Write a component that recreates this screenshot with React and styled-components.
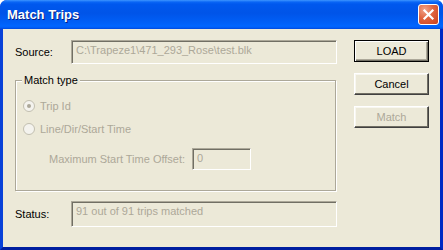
import styled, { createGlobalStyle } from "styled-components";

const GlobalStyle = createGlobalStyle`
  html, body {
    margin: 0;
    padding: 0;
    background: #ffffff;
  }
  body {
    font-family: "Liberation Sans", Arial, sans-serif;
    font-size: 11px;
  }
`;

const Window = styled.div`
  width: 443px;
  height: 250px;
  display: flex;
  flex-direction: column;
  box-sizing: border-box;
  border-radius: 7px 7px 0 0;
  overflow: hidden;
  background: #0831d9;
`;

const TitleBar = styled.div`
  height: 29px;
  flex-shrink: 0;
  display: flex;
  align-items: center;
  justify-content: space-between;
  padding: 0 4px 0 7px;
  background: linear-gradient(
    180deg,
    #3d95ff 0%,
    #0a66f5 7%,
    #0058ee 14%,
    #0054e8 45%,
    #0060f8 80%,
    #0066ff 90%,
    #005af4 96%,
    #0047d8 100%
  );
`;

const Title = styled.span`
  font-family: "Liberation Sans", Arial, sans-serif;
  font-weight: bold;
  font-size: 13px;
  color: #ffffff;
  text-shadow: 1px 1px 0 #0a1f80;
  padding-bottom: 1px;
`;

const CloseButton = styled.div`
  width: 21px;
  height: 21px;
  box-sizing: border-box;
  border: 1px solid #ffffff;
  border-radius: 3px;
  background: radial-gradient(circle at 30% 25%, #f0a38a 0%, #e0643f 45%, #c8401e 100%);
  display: flex;
  align-items: center;
  justify-content: center;
  margin-bottom: 1px;
`;

const Frame = styled.div`
  flex: 1;
  display: flex;
  border-left: 3px solid #0841d8;
  border-right: 3px solid #0029c4;
  border-bottom: 3px solid #001ea0;
  background: #ece9d8;
`;

const Body = styled.div`
  flex: 1;
  display: flex;
  gap: 17px;
  padding: 11px 0 0 12px;
  color: #000000;
`;

const LeftColumn = styled.div`
  width: 322px;
  display: flex;
  flex-direction: column;
`;

const FieldRow = styled.div`
  display: flex;
  align-items: center;
  height: ${(p) => p.$height}px;
  margin-top: ${(p) => p.$top || 0}px;
`;

const Label = styled.span`
  width: ${(p) => p.$width}px;
  flex-shrink: 0;
  color: ${(p) => (p.$disabled ? "#aca899" : "#000000")};
  line-height: 13px;
`;

const TextField = styled.div`
  width: ${(p) => p.$width}px;
  height: ${(p) => p.$height}px;
  box-sizing: border-box;
  border-top: 1px solid #aca899;
  border-left: 1px solid #aca899;
  border-right: 1px solid #ffffff;
  border-bottom: 1px solid #ffffff;
  box-shadow: inset 1px 1px 0 #716f64;
  background: #ece9d8;
  color: #aca899;
  padding: 3px 0 0 4px;
  line-height: 13px;
  white-space: nowrap;
  overflow: hidden;
`;

const GroupBox = styled.div`
  position: relative;
  margin-top: 16px;
  width: 321px;
  height: 111px;
  box-sizing: border-box;
  border: 1px solid #aca899;
  box-shadow: 1px 1px 0 #ffffff, inset 1px 1px 0 #ffffff;
  padding: 17px 0 0 7px;
  display: flex;
  flex-direction: column;
`;

const Legend = styled.span`
  position: absolute;
  top: -7px;
  left: 6px;
  padding: 0 2px;
  background: #ece9d8;
  line-height: 13px;
`;

const RadioRow = styled.div`
  display: flex;
  align-items: center;
  gap: 5px;
  height: 16px;
  margin-bottom: 7px;
  color: #aca899;
`;

const Radio = styled.span`
  width: 12px;
  height: 12px;
  box-sizing: border-box;
  border-radius: 50%;
  border: 1px solid #c2bfb0;
  background: #f4f3ee;
  display: flex;
  align-items: center;
  justify-content: center;

  &::after {
    content: "";
    display: ${(p) => (p.$checked ? "block" : "none")};
    width: 4px;
    height: 4px;
    border-radius: 50%;
    background: #aca899;
  }
`;

const OffsetRow = styled.div`
  display: flex;
  align-items: center;
  margin: 4px 0 0 26px;
`;

const ButtonColumn = styled.div`
  display: flex;
  flex-direction: column;
  gap: 11px;
`;

const Button = styled.div`
  width: 75px;
  height: 22px;
  box-sizing: border-box;
  display: flex;
  align-items: center;
  justify-content: center;
  background: #ece9d8;
  color: ${(p) => (p.$disabled ? "#aca899" : "#000000")};
  border-top: 1px solid ${(p) => (p.$default ? "#000000" : "#ffffff")};
  border-left: 1px solid ${(p) => (p.$default ? "#000000" : "#ffffff")};
  border-right: 1px solid ${(p) => (p.$default ? "#000000" : "#404040")};
  border-bottom: 1px solid ${(p) => (p.$default ? "#000000" : "#404040")};
  box-shadow: ${(p) =>
    p.$default
      ? "inset 1px 1px 0 #ffffff, inset -1px -1px 0 #716f64, inset -2px -2px 0 #aca899"
      : "inset -1px -1px 0 #716f64, inset 1px 1px 0 #f8f7f0"};
`;

const CloseIcon = () => (
  <svg width="13" height="13" viewBox="0 0 13 13">
    <path d="M2.5 2.5 L10.5 10.5 M10.5 2.5 L2.5 10.5" stroke="#ffffff" strokeWidth="2.2" strokeLinecap="square" />
  </svg>
);

export default function App() {
  return (
    <>
      <GlobalStyle />
      <Window>
        <TitleBar>
          <Title>Match Trips</Title>
          <CloseButton>
            <CloseIcon />
          </CloseButton>
        </TitleBar>
        <Frame>
          <Body>
            <LeftColumn>
              <FieldRow $height={24}>
                <Label $width={56}>Source:</Label>
                <TextField $width={266} $height={24}>
                  C:\Trapeze1\471_293_Rose\test.blk
                </TextField>
              </FieldRow>

              <GroupBox>
                <Legend>Match type</Legend>
                <RadioRow>
                  <Radio $checked />
                  Trip Id
                </RadioRow>
                <RadioRow>
                  <Radio />
                  Line/Dir/Start Time
                </RadioRow>
                <OffsetRow>
                  <Label $width={143} $disabled>
                    Maximum Start Time Offset:
                  </Label>
                  <TextField $width={59} $height={22}>
                    0
                  </TextField>
                </OffsetRow>
              </GroupBox>

              <FieldRow $height={26} $top={10}>
                <Label $width={56}>Status:</Label>
                <TextField $width={267} $height={26}>
                  91 out of 91 trips matched
                </TextField>
              </FieldRow>
            </LeftColumn>

            <ButtonColumn>
              <Button $default>LOAD</Button>
              <Button>Cancel</Button>
              <Button $disabled>Match</Button>
            </ButtonColumn>
          </Body>
        </Frame>
      </Window>
    </>
  );
}
